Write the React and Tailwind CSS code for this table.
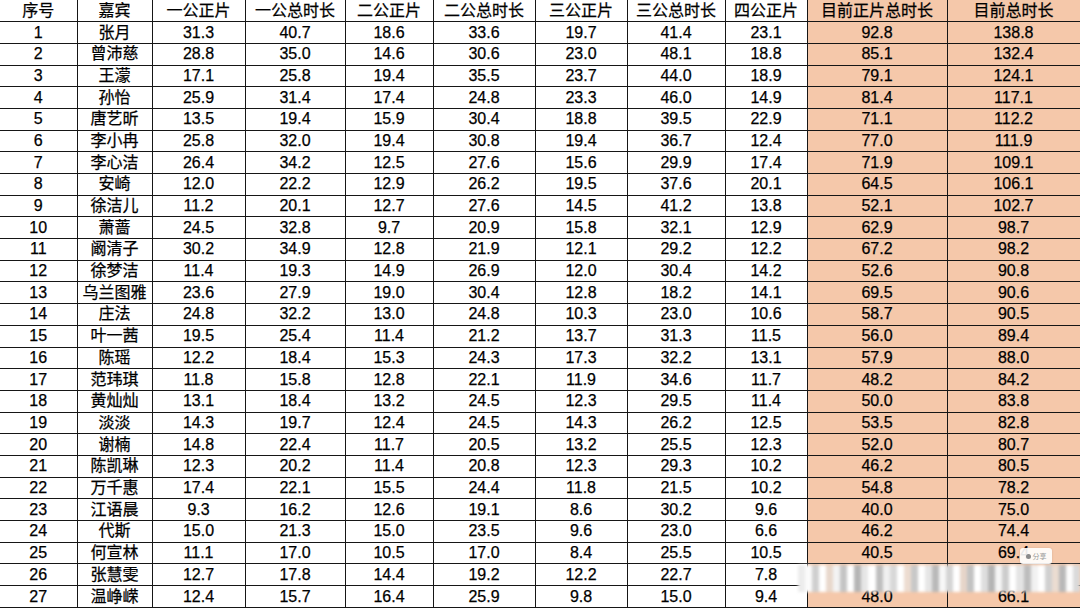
const cols = [77, 75, 93, 100, 88, 102, 92, 98, 82, 140, 133]

const head = ['序号', '嘉宾', '一公正片', '一公总时长', '二公正片', '二公总时长', '三公正片', '三公总时长', '四公正片', '目前正片总时长', '目前总时长']

const rows = [
  ['张月', '31.3', '40.7', '18.6', '33.6', '19.7', '41.4', '23.1', '92.8', '138.8'],
  ['曾沛慈', '28.8', '35.0', '14.6', '30.6', '23.0', '48.1', '18.8', '85.1', '132.4'],
  ['王濛', '17.1', '25.8', '19.4', '35.5', '23.7', '44.0', '18.9', '79.1', '124.1'],
  ['孙怡', '25.9', '31.4', '17.4', '24.8', '23.3', '46.0', '14.9', '81.4', '117.1'],
  ['唐艺昕', '13.5', '19.4', '15.9', '30.4', '18.8', '39.5', '22.9', '71.1', '112.2'],
  ['李小冉', '25.8', '32.0', '19.4', '30.8', '19.4', '36.7', '12.4', '77.0', '111.9'],
  ['李心洁', '26.4', '34.2', '12.5', '27.6', '15.6', '29.9', '17.4', '71.9', '109.1'],
  ['安崎', '12.0', '22.2', '12.9', '26.2', '19.5', '37.6', '20.1', '64.5', '106.1'],
  ['徐洁儿', '11.2', '20.1', '12.7', '27.6', '14.5', '41.2', '13.8', '52.1', '102.7'],
  ['萧蔷', '24.5', '32.8', '9.7', '20.9', '15.8', '32.1', '12.9', '62.9', '98.7'],
  ['阚清子', '30.2', '34.9', '12.8', '21.9', '12.1', '29.2', '12.2', '67.2', '98.2'],
  ['徐梦洁', '11.4', '19.3', '14.9', '26.9', '12.0', '30.4', '14.2', '52.6', '90.8'],
  ['乌兰图雅', '23.6', '27.9', '19.0', '30.4', '12.8', '18.2', '14.1', '69.5', '90.6'],
  ['庄法', '24.8', '32.2', '13.0', '24.8', '10.3', '23.0', '10.6', '58.7', '90.5'],
  ['叶一茜', '19.5', '25.4', '11.4', '21.2', '13.7', '31.3', '11.5', '56.0', '89.4'],
  ['陈瑶', '12.2', '18.4', '15.3', '24.3', '17.3', '32.2', '13.1', '57.9', '88.0'],
  ['范玮琪', '11.8', '15.8', '12.8', '22.1', '11.9', '34.6', '11.7', '48.2', '84.2'],
  ['黄灿灿', '13.1', '18.4', '13.2', '24.5', '12.3', '29.5', '11.4', '50.0', '83.8'],
  ['淡淡', '14.3', '19.7', '12.4', '24.5', '14.3', '26.2', '12.5', '53.5', '82.8'],
  ['谢楠', '14.8', '22.4', '11.7', '20.5', '13.2', '25.5', '12.3', '52.0', '80.7'],
  ['陈凯琳', '12.3', '20.2', '11.4', '20.8', '12.3', '29.3', '10.2', '46.2', '80.5'],
  ['万千惠', '17.4', '22.1', '15.5', '24.4', '11.8', '21.5', '10.2', '54.8', '78.2'],
  ['江语晨', '9.3', '16.2', '12.6', '19.1', '8.6', '30.2', '9.6', '40.0', '75.0'],
  ['代斯', '15.0', '21.3', '15.0', '23.5', '9.6', '23.0', '6.6', '46.2', '74.4'],
  ['何宣林', '11.1', '17.0', '10.5', '17.0', '8.4', '25.5', '10.5', '40.5', '69.4'],
  ['张慧雯', '12.7', '17.8', '14.4', '19.2', '12.2', '22.7', '7.8', '', ''],
  ['温峥嵘', '12.4', '15.7', '16.4', '25.9', '9.8', '15.0', '9.4', '48.0', '66.1'],
]

// blurred strip over row 26 (screenshot artefact)
const stripes = [
  '#ececec', '#fbfbfb', '#cfcfcf', '#ffffff', '#e8d8cc', '#f3f3f3', '#c4c4c4', '#ffffff', '#b5b5b5', '#e6e6e6',
  '#ffffff', '#bebebe', '#f0f0f0', '#d8d8d8', '#ffffff', '#ecdcd0', '#c8c8c8', '#ffffff', '#e6e6e6', '#b9b9b9',
  '#f7f7f7', '#d4d4d4', '#ffffff', '#e6d5c9', '#c2c2c2', '#ffffff', '#dedede', '#b4b4b4', '#f5f5f5', '#cccccc',
  '#ffffff', '#e4e4e4', '#bdbdbd', '#f1f1f1', '#ffffff', '#d0d0d0', '#ebdcd1', '#b8b8b8', '#fcfcfc', '#dadada',
]

const font = { fontFamily: '"Liberation Sans", "Noto Sans CJK SC", Arial, sans-serif' }

const cell = 'border-r border-b border-[#161616] p-0 text-center text-[16px] leading-none [-webkit-text-stroke:0.25px_#000]'

export default function App() {
  return (
    <div className="relative w-[1080px] h-[608px] overflow-hidden bg-white text-black" style={font}>
      <table className="w-[1080px] h-[608px] table-fixed border-collapse">
        <colgroup>
          {cols.map((w, i) => <col key={i} style={{ width: w }} />)}
        </colgroup>
        <thead>
          <tr className="h-[21.7px]">
            {head.map((h, i) => (
              <th key={h} className={`${cell} font-normal ${i >= 9 ? 'bg-[#f5c8aa]' : ''}`}>
                {h}
              </th>
            ))}
          </tr>
        </thead>
        <tbody>
          {rows.map((r, idx) => (
            <tr key={idx} className="h-[21.7px]">
              <td className={cell}>{idx + 1}</td>
              {r.map((v, i) => (
                <td key={i} className={`${cell} ${i >= 8 ? 'bg-[#f5c8aa]' : ''}`}>
                  {v}
                </td>
              ))}
            </tr>
          ))}
        </tbody>
      </table>

      {/* watermark strip */}
      <div className="absolute left-[798px] top-[565px] w-[282px] h-[27px] flex blur-[1.5px]">
        {stripes.map((c, i) => (
          <div key={i} className="flex-1" style={{ background: c }} />
        ))}
      </div>

      {/* small share tag */}
      <div className="absolute left-[1020px] top-[548px] w-[32px] h-[16px] rounded-[3px] bg-white/90 flex items-center justify-center gap-[2px] shadow-[0_0_2px_rgba(0,0,0,0.15)]">
        <span className="w-[5px] h-[5px] rounded-full bg-[#8a8a8a]" />
        <span className="text-[7px] leading-none text-[#9a9a9a]" style={font}>分享</span>
      </div>
    </div>
  )
}
